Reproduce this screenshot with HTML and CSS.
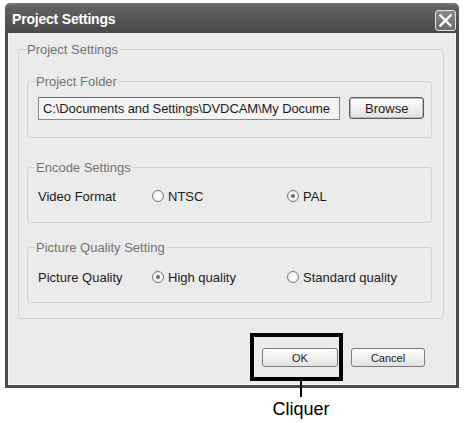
FILE: index.html
```html
<!DOCTYPE html>
<html>
<head>
<meta charset="utf-8">
<link rel="stylesheet" href="styles.css">
</head>
<body>
<div class="window">
  <div class="titlebar">
    <span class="title">Project Settings</span>
    <span class="close"><svg width="13" height="13" viewBox="0 0 13 13"><path d="M1.5 1.5 L11.5 11.5 M11.5 1.5 L1.5 11.5" stroke="#fff" stroke-width="2.4" stroke-linecap="square"/></svg></span>
  </div>
  <div class="client">
    <fieldset class="group outer">
      <legend>Project Settings</legend>
      <fieldset class="group folder">
        <legend>Project Folder</legend>
        <div class="folder-row">
          <div class="path">C:\Documents and Settings\DVDCAM\My Docume</div>
          <button class="btn browse">Browse</button>
        </div>
      </fieldset>
      <fieldset class="group encode">
        <legend>Encode Settings</legend>
        <div class="opt-row">
          <span class="opt-label">Video Format</span>
          <span class="radio"><i class="dot"></i>NTSC</span>
          <span class="radio checked"><i class="dot"></i>PAL</span>
        </div>
      </fieldset>
      <fieldset class="group quality">
        <legend>Picture Quality Setting</legend>
        <div class="opt-row">
          <span class="opt-label">Picture Quality</span>
          <span class="radio checked"><i class="dot"></i>High quality</span>
          <span class="radio"><i class="dot"></i>Standard quality</span>
        </div>
      </fieldset>
    </fieldset>
    <div class="actions">
      <button class="btn small ok">OK</button>
      <button class="btn small cancel">Cancel</button>
    </div>
  </div>
</div>
<div class="highlight"></div>
<div class="leader"></div>
<div class="caption">Cliquer</div>
</body>
</html>
```

FILE: styles.css
```css
html, body {
  margin: 0;
  padding: 0;
  background: #ffffff;
}
body {
  width: 464px;
  height: 423px;
  position: relative;
  overflow: hidden;
  font-family: "Liberation Sans", Arial, sans-serif;
  color: #1c1c1c;
}
.window {
  margin: 3px 0 0 5px;
  width: 454px;
}
.titlebar {
  height: 30px;
  border-radius: 5px 5px 0 0;
  background: linear-gradient(#7c7c7c 0, #626262 3px, #575757 50%, #4a4a4a 100%);
  display: flex;
  align-items: center;
  justify-content: space-between;
  padding: 0 3px 0 7px;
}
.title {
  color: #fff;
  font-weight: bold;
  font-size: 14px;
  letter-spacing: -0.2px;
  padding-top: 1px;
}
.close {
  width: 19px;
  height: 19px;
  border: 1px solid #e4e4e4;
  border-radius: 3px;
  background: linear-gradient(#8a8a8a, #6a6a6a);
  display: flex;
  align-items: center;
  justify-content: center;
  margin-top: 4px;
}
.client {
  background: #ebebeb;
  border: 3px solid #4c4c4c;
  border-top: 0;
  box-shadow: inset 1px 0 0 #f8f8f8, inset -1px 0 0 #f8f8f8, inset 0 -1px 0 #f8f8f8;
  padding: 9px 12px 18px 10px;
}
.group {
  margin: 0;
  border: 1px solid #d2d2d2;
  border-radius: 3px;
  min-width: 0;
}
.group legend {
  padding: 0 2px 0 0;
  font-size: 13px;
  line-height: 15px;
  color: #737373;
}
.outer {
  padding: 17px 11px 15px 8px;
}
.folder {
  padding: 8px 7px 17px 8px;
}
.encode {
  margin-top: 22px;
  padding: 11px 8px 16px 8px;
}
.quality {
  margin-top: 17px;
  padding: 12px 8px 15px 8px;
}
.folder-row {
  display: flex;
  align-items: flex-start;
  margin-left: 2px;
}
.path {
  height: 21px;
  border: 1px solid #8a8a8a;
  border-top-color: #6e6e6e;
  background: #f4f4f4;
  font-size: 13px;
  line-height: 21px;
  padding-left: 4px;
  box-sizing: content-box;
  white-space: nowrap;
  overflow: hidden;
  width: 298px;
  letter-spacing: -0.1px;
  color: #1c1c1c;
}
.btn {
  font-family: "Liberation Sans", Arial, sans-serif;
  color: #1c1c1c;
  border: 1px solid #7a7a7a;
  border-radius: 3px;
  background: linear-gradient(#fefefe, #ececec 60%, #e2e2e2);
  padding: 0;
  margin: 0;
}
.browse {
  margin-left: 9px;
  width: 75px;
  height: 22px;
  font-size: 13px;
  border-color: #5a5a5a;
  box-shadow: inset 0 0 0 1px #b8b8b8;
}
.opt-row {
  display: grid;
  grid-template-columns: 114px 135px 1fr;
  align-items: center;
  margin-left: 2px;
  height: 20px;
  font-size: 13px;
}
.radio {
  display: flex;
  align-items: center;
  gap: 4px;
}
.dot {
  width: 10px;
  height: 10px;
  border: 1.5px solid #7a7a7a;
  border-radius: 50%;
  background: radial-gradient(circle, #ffffff 0, #f2f2f2 60%, #d8d8d8 100%);
  display: flex;
  align-items: center;
  justify-content: center;
  flex: none;
}
.checked .dot::after {
  content: "";
  width: 4px;
  height: 4px;
  border-radius: 50%;
  background: #6a6a6a;
}
.actions {
  display: flex;
  justify-content: flex-end;
  gap: 13px;
  margin: 29px 19px 0 0;
}
.small {
  height: 19px;
  font-size: 11px;
}
.ok { width: 76px; }
.cancel { width: 74px; }
.highlight {
  position: absolute;
  left: 250px;
  top: 333px;
  width: 85px;
  height: 40px;
  border: 4px solid #000;
}
.leader {
  position: absolute;
  left: 300px;
  top: 380px;
  width: 2px;
  height: 17px;
  background: #000;
}
.caption {
  position: absolute;
  left: 251px;
  width: 100px;
  top: 399px;
  text-align: center;
  font-size: 18px;
  line-height: 20px;
  color: #000;
}
```
